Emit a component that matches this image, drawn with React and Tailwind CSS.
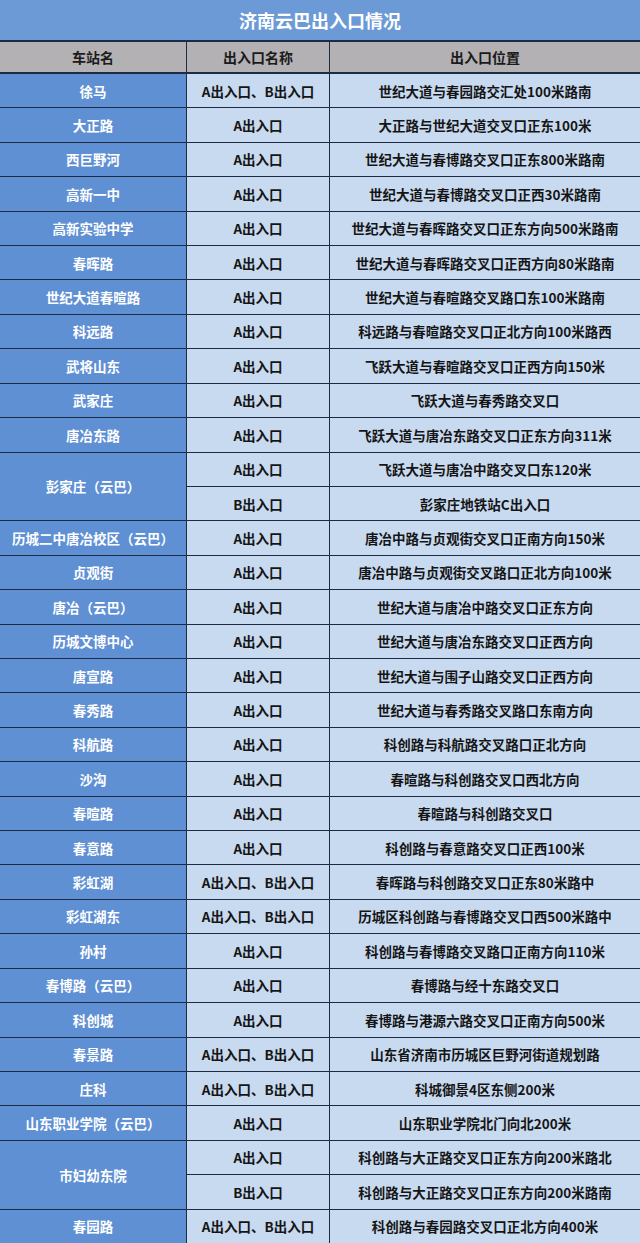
const rows = [
  { name: "徐马", exits: ["A出入口、B出入口"], places: ["世纪大道与春园路交汇处100米路南"] },
  { name: "大正路", exits: ["A出入口"], places: ["大正路与世纪大道交叉口正东100米"] },
  { name: "西巨野河", exits: ["A出入口"], places: ["世纪大道与春博路交叉口正东800米路南"] },
  { name: "高新一中", exits: ["A出入口"], places: ["世纪大道与春博路交叉口正西30米路南"] },
  { name: "高新实验中学", exits: ["A出入口"], places: ["世纪大道与春晖路交叉口正东方向500米路南"] },
  { name: "春晖路", exits: ["A出入口"], places: ["世纪大道与春晖路交叉口正西方向80米路南"] },
  { name: "世纪大道春暄路", exits: ["A出入口"], places: ["世纪大道与春暄路交叉路口东100米路南"] },
  { name: "科远路", exits: ["A出入口"], places: ["科远路与春暄路交叉口正北方向100米路西"] },
  { name: "武将山东", exits: ["A出入口"], places: ["飞跃大道与春暄路交叉口正西方向150米"] },
  { name: "武家庄", exits: ["A出入口"], places: ["飞跃大道与春秀路交叉口"] },
  { name: "唐冶东路", exits: ["A出入口"], places: ["飞跃大道与唐冶东路交叉口正东方向311米"] },
  { name: "彭家庄（云巴）", exits: ["A出入口", "B出入口"], places: ["飞跃大道与唐冶中路交叉口东120米", "彭家庄地铁站C出入口"] },
  { name: "历城二中唐冶校区（云巴）", exits: ["A出入口"], places: ["唐冶中路与贞观街交叉口正南方向150米"] },
  { name: "贞观街", exits: ["A出入口"], places: ["唐冶中路与贞观街交叉路口正北方向100米"] },
  { name: "唐冶（云巴）", exits: ["A出入口"], places: ["世纪大道与唐冶中路交叉口正东方向"] },
  { name: "历城文博中心", exits: ["A出入口"], places: ["世纪大道与唐冶东路交叉口正西方向"] },
  { name: "唐宣路", exits: ["A出入口"], places: ["世纪大道与围子山路交叉口正西方向"] },
  { name: "春秀路", exits: ["A出入口"], places: ["世纪大道与春秀路交叉路口东南方向"] },
  { name: "科航路", exits: ["A出入口"], places: ["科创路与科航路交叉路口正北方向"] },
  { name: "沙沟", exits: ["A出入口"], places: ["春暄路与科创路交叉口西北方向"] },
  { name: "春暄路", exits: ["A出入口"], places: ["春暄路与科创路交叉口"] },
  { name: "春意路", exits: ["A出入口"], places: ["科创路与春意路交叉口正西100米"] },
  { name: "彩虹湖", exits: ["A出入口、B出入口"], places: ["春晖路与科创路交叉口正东80米路中"] },
  { name: "彩虹湖东", exits: ["A出入口、B出入口"], places: ["历城区科创路与春博路交叉口西500米路中"] },
  { name: "孙村", exits: ["A出入口"], places: ["科创路与春博路交叉路口正南方向110米"] },
  { name: "春博路（云巴）", exits: ["A出入口"], places: ["春博路与经十东路交叉口"] },
  { name: "科创城", exits: ["A出入口"], places: ["春博路与港源六路交叉口正南方向500米"] },
  { name: "春景路", exits: ["A出入口、B出入口"], places: ["山东省济南市历城区巨野河街道规划路"] },
  { name: "庄科", exits: ["A出入口、B出入口"], places: ["科城御景4区东侧200米"] },
  { name: "山东职业学院（云巴）", exits: ["A出入口"], places: ["山东职业学院北门向北200米"] },
  { name: "市妇幼东院", exits: ["A出入口", "B出入口"], places: ["科创路与大正路交叉口正东方向200米路北", "科创路与大正路交叉口正东方向200米路南"] },
  { name: "春园路", exits: ["A出入口、B出入口"], places: ["科创路与春园路交叉口正北方向400米"] },
];

const font = { fontFamily: '"Noto Sans CJK SC", "Noto Sans", sans-serif' };

export default function App() {
  return (
    <div className="w-[640px] h-[1243px] overflow-hidden bg-[#1d2b45]" style={font}>
      {/* title */}
      <div className="h-[40px] bg-[#6b9ad6] flex items-center justify-center text-white text-[18px] font-bold">
        济南云巴出入口情况
      </div>
      {/* header */}
      <div className="mt-[2px] h-[30px] grid grid-cols-[186px_142px_1fr] gap-x-[1px] text-[14px] font-bold text-[#1b1b1b]">
        <div className="bg-[#b3b1b3] flex items-center justify-center">车站名</div>
        <div className="bg-[#b3b1b3] flex items-center justify-center">出入口名称</div>
        <div className="bg-[#b3b1b3] flex items-center justify-center">出入口位置</div>
      </div>
      {/* body */}
      <div className="mt-[2px] h-[1169px] grid grid-cols-[186px_142px_1fr] grid-rows-[repeat(34,minmax(0,1fr))] gap-[1px] text-[13.5px] font-bold">
        {rows.map((r) => [
          <div
            key={r.name + "-n"}
            className={
              (r.exits.length > 1 ? "row-span-2 " : "") +
              "bg-[#5f90d4] text-white flex items-center justify-center whitespace-nowrap"
            }
          >
            {r.name}
          </div>,
          ...r.exits.flatMap((e, i) => [
            <div key={r.name + "-e" + i} className="bg-[#c8daf0] text-[#151515] flex items-center justify-center whitespace-nowrap">
              {e}
            </div>,
            <div key={r.name + "-p" + i} className="bg-[#c8daf0] text-[#151515] flex items-center justify-center whitespace-nowrap">
              {r.places[i]}
            </div>,
          ]),
        ])}
      </div>
    </div>
  );
}
